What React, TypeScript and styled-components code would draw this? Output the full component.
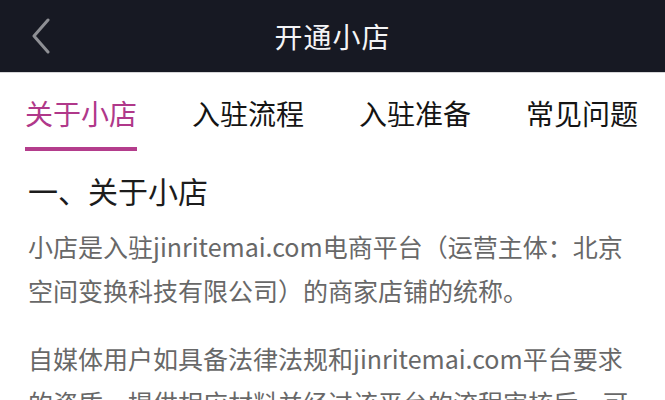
import React from "react";
import styled, { createGlobalStyle } from "styled-components";

const Global = createGlobalStyle`
  html, body { margin: 0; padding: 0; background: #ffffff; }
  body { font-family: "Noto Sans CJK SC", "Noto Sans", sans-serif; }
  * { box-sizing: border-box; }
`;

const Page = styled.div`
  width: 665px;
  height: 400px;
  overflow: hidden;
  background: #ffffff;
`;

const NavBar = styled.header`
  height: 73px;
  background: #171923;
  border-bottom: 1px solid #d6d6d8;
  display: grid;
  grid-template-columns: 1fr auto 1fr;
  align-items: center;
`;

const BackButton = styled.div`
  padding-left: 31px;
  display: flex;
  align-items: center;
  height: 72px;
`;

const Title = styled.h1`
  margin: 0;
  font-size: 28px;
  font-weight: 400;
  color: #f4f4f6;
  line-height: 40px;
  letter-spacing: 1px;
`;

const Tabs = styled.nav`
  display: flex;
  justify-content: space-between;
  padding: 20px 27px 0 25px;
`;

const Tab = styled.div<{ $active?: boolean }>`
  font-size: 28px;
  line-height: 40px;
  color: ${(p) => (p.$active ? "#b0388a" : "#141414")};
  padding-bottom: 14px;
  border-bottom: 4px solid ${(p) => (p.$active ? "#b43d8c" : "transparent")};
`;

const Content = styled.section`
  padding: 19px 20px 0 28px;
`;

const Heading = styled.h2`
  margin: 0 0 14px;
  font-size: 30px;
  font-weight: 400;
  line-height: 40px;
  color: #1c1c1c;
`;

const Paragraph = styled.p`
  margin: 0 0 24px;
  font-size: 25px;
  line-height: 44px;
  color: #686868;
`;

export default function App() {
  return (
    <Page>
      <Global />
      <NavBar>
        <BackButton>
          <svg width="20" height="36" viewBox="0 0 20 36" fill="none">
            <polyline
              points="17,2 3,18 17,34"
              stroke="#8e8f94"
              strokeWidth="3"
              strokeLinecap="round"
              strokeLinejoin="round"
            />
          </svg>
        </BackButton>
        <Title>开通小店</Title>
        <div />
      </NavBar>
      <Tabs>
        <Tab $active>关于小店</Tab>
        <Tab>入驻流程</Tab>
        <Tab>入驻准备</Tab>
        <Tab>常见问题</Tab>
      </Tabs>
      <Content>
        <Heading>一、关于小店</Heading>
        <Paragraph>
          小店是入驻jinritemai.com电商平台（运营主体：北京
          <br />
          空间变换科技有限公司）的商家店铺的统称。
        </Paragraph>
        <Paragraph>
          自媒体用户如具备法律法规和jinritemai.com平台要求
          <br />
          的资质，提供相应材料并经过该平台的流程审核后，可开通小店。
        </Paragraph>
      </Content>
    </Page>
  );
}
